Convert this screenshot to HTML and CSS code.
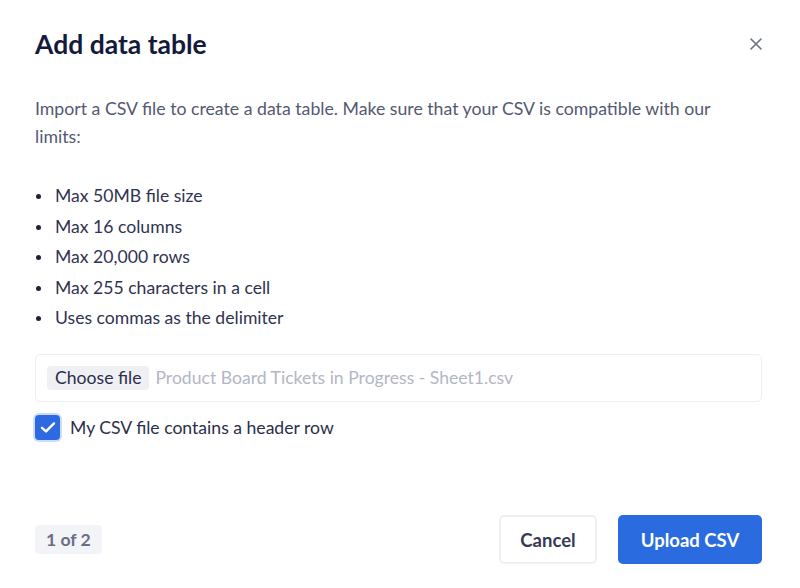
FILE: index.html
```html
<!DOCTYPE html>
<html lang="en">
<head>
<meta charset="utf-8">
<title>Add data table</title>
<link rel="stylesheet" href="styles.css">
</head>
<body>
<div class="modal">
  <div class="header">
    <h1 class="title">Add data table</h1>
    <button class="close" aria-label="Close">
      <svg width="12" height="12" viewBox="0 0 12 12"><path d="M1 1L11 11M11 1L1 11" stroke="#6b6f88" stroke-width="1.6" stroke-linecap="round"/></svg>
    </button>
  </div>
  <p class="intro">Import a CSV file to create a data table. Make sure that your CSV is compatible with our limits:</p>
  <ul class="limits">
    <li>Max 50MB file size</li>
    <li>Max 16 columns</li>
    <li>Max 20,000 rows</li>
    <li>Max 255 characters in a cell</li>
    <li>Uses commas as the delimiter</li>
  </ul>
  <div class="file-box">
    <span class="choose">Choose file</span>
    <span class="filename">Product Board Tickets in Progress - Sheet1.csv</span>
  </div>
  <label class="check-row">
    <span class="checkbox">
      <svg width="16" height="13" viewBox="0 0 16 13"><path d="M2 6.8L6 10.4L14 2.4" fill="none" stroke="#fff" stroke-width="2.4" stroke-linecap="round" stroke-linejoin="round"/></svg>
    </span>
    <span class="check-label">My CSV file contains a header row</span>
  </label>
  <div class="footer">
    <span class="step">1 of 2</span>
    <div class="actions">
      <button class="btn btn-cancel">Cancel</button>
      <button class="btn btn-primary">Upload CSV</button>
    </div>
  </div>
</div>
</body>
</html>
```
FILE: styles.css
```css
* { box-sizing: border-box; }
html, body { margin: 0; padding: 0; background: #fff; }
body {
  font-family: "Lato", "Noto Sans", sans-serif;
  color: #2e3250;
}
.modal {
  height: 588px;
  display: flex;
  flex-direction: column;
  padding: 28px 38px 24px 35px;
}
.header {
  display: flex;
  align-items: center;
  justify-content: space-between;
  height: 32px;
}
.title {
  margin: 0;
  font-size: 26.5px;
  line-height: 32px;
  font-weight: 700;
  color: #141a3b;
}
.close {
  border: 0;
  background: none;
  padding: 0;
  width: 14px;
  height: 14px;
  display: flex;
  align-items: center;
  justify-content: center;
  margin-right: -1px;
}
.intro {
  margin: 35px 0 0;
  max-width: 700px;
  font-size: 17.7px;
  line-height: 28px;
  color: #545971;
}
.limits {
  list-style: none;
  margin: 30px 0 0;
  padding: 0;
}
.limits li {
  position: relative;
  padding-left: 20px;
  font-size: 17.6px;
  line-height: 30.5px;
  color: #2f3350;
}
.limits li::before {
  content: "";
  position: absolute;
  left: 1px;
  top: 13px;
  width: 5px;
  height: 5px;
  border-radius: 50%;
  background: #1c2140;
}
.file-box {
  margin-top: 20px;
  height: 48px;
  border: 1.5px solid #eceef2;
  border-radius: 5px;
  display: flex;
  align-items: center;
  padding-left: 11px;
  gap: 6px;
}
.choose {
  background: #eff0f4;
  border-radius: 4px;
  padding: 0 8px;
  height: 24px;
  line-height: 24px;
  font-size: 17.6px;
  color: #2b2f4a;
}
.filename {
  font-size: 17.6px;
  color: #b4b6c6;
}
.check-row {
  margin-top: 12px;
  display: flex;
  align-items: center;
  height: 28px;
}
.checkbox {
  width: 25px;
  height: 25px;
  border-radius: 4px;
  background: #2d6ae2;
  box-shadow: 0 0 0 2px #cddcf8;
  display: flex;
  align-items: center;
  justify-content: center;
  margin-right: 10px;
}
.check-label {
  font-size: 17.6px;
  color: #2b2f4a;
}
.footer {
  margin-top: auto;
  display: flex;
  align-items: center;
  justify-content: space-between;
}
.step {
  background: #f3f4f7;
  color: #6a6d84;
  border-radius: 4px;
  font-size: 17.6px;
  font-weight: 700;
  height: 29px;
  line-height: 29px;
  padding: 0 11px;
}
.actions {
  display: flex;
  gap: 21px;
}
.btn {
  font-family: inherit;
  font-size: 18.5px;
  font-weight: 700;
  height: 49px;
  border-radius: 5px;
  cursor: pointer;
}
.btn-cancel {
  width: 98px;
  background: #fff;
  border: 2px solid #f0f0f3;
  color: #363a55;
}
.btn-primary {
  width: 144px;
  background: #2b6be0;
  border: 0;
  color: #fff;
}
```
